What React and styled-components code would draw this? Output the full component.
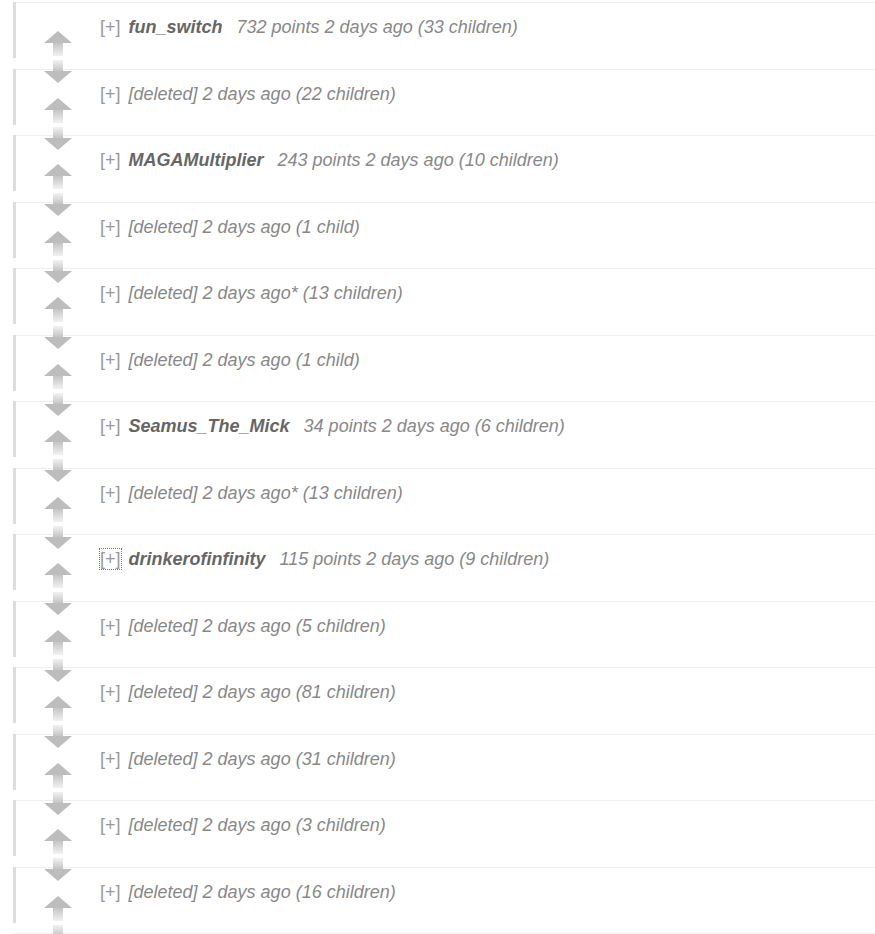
import React from 'react';
import styled, { createGlobalStyle } from 'styled-components';

const GlobalStyle = createGlobalStyle`
  body {
    margin: 0;
    background: #ffffff;
    font-family: "Liberation Sans", Arial, sans-serif;
  }
`;

const List = styled.div`
  padding-top: 2px;
  overflow: hidden;
  height: 934px;
  box-sizing: border-box;
`;

const Row = styled.div`
  display: flex;
  align-items: flex-start;
  height: 66.5px;
  margin-left: 13px;
  border-top: 1px solid #efefef;
  box-sizing: border-box;
`;

const Bar = styled.div`
  flex-shrink: 0;
  width: 3px;
  height: 56px;
  margin-top: -1px;
  background: #dddddd;
`;

const Arrows = styled.div`
  flex-shrink: 0;
  display: flex;
  flex-direction: column;
  width: 28px;
  margin: 26px 28px 0 28px;
  position: relative;
  z-index: 1;
`;

const Entry = styled.div`
  padding-top: 14px;
  font-size: 18px;
  line-height: 20px;
  white-space: nowrap;
`;

const Toggle = styled.span`
  display: inline-block;
  color: #999999;
  margin-right: 8px;
  outline: ${p => (p.focused ? '1px dotted #777' : 'none')};
`;

const Author = styled.span`
  font-weight: bold;
  font-style: italic;
  color: #666666;
  margin-right: 14px;
`;

const Meta = styled.span`
  font-style: italic;
  color: #888888;
`;

const UpArrow = () => (
  <svg width="28" height="27" viewBox="0 0 28 27">
    <defs>
      <linearGradient id="upStem" x1="0" y1="0" x2="0" y2="1">
        <stop offset="0" stopColor="#c4c4c4" />
        <stop offset="1" stopColor="#f2f2f2" />
      </linearGradient>
    </defs>
    <polygon points="0,14 14,2 28,14" fill="#bdbdbd" />
    <rect x="9" y="14" width="10" height="13" fill="url(#upStem)" />
  </svg>
);

const DownArrow = () => (
  <svg width="28" height="27" viewBox="0 0 28 27">
    <defs>
      <linearGradient id="downStem" x1="0" y1="0" x2="0" y2="1">
        <stop offset="0" stopColor="#f2f2f2" />
        <stop offset="1" stopColor="#c4c4c4" />
      </linearGradient>
    </defs>
    <rect x="9" y="4" width="10" height="11" fill="url(#downStem)" />
    <polygon points="0,15 28,15 14,27" fill="#bdbdbd" />
  </svg>
);

const comments = [
  { author: 'fun_switch', meta: '732 points 2 days ago (33 children)' },
  { meta: '[deleted] 2 days ago (22 children)' },
  { author: 'MAGAMultiplier', meta: '243 points 2 days ago (10 children)' },
  { meta: '[deleted] 2 days ago (1 child)' },
  { meta: '[deleted] 2 days ago* (13 children)' },
  { meta: '[deleted] 2 days ago (1 child)' },
  { author: 'Seamus_The_Mick', meta: '34 points 2 days ago (6 children)' },
  { meta: '[deleted] 2 days ago* (13 children)' },
  { author: 'drinkerofinfinity', meta: '115 points 2 days ago (9 children)', focused: true },
  { meta: '[deleted] 2 days ago (5 children)' },
  { meta: '[deleted] 2 days ago (81 children)' },
  { meta: '[deleted] 2 days ago (31 children)' },
  { meta: '[deleted] 2 days ago (3 children)' },
  { meta: '[deleted] 2 days ago (16 children)' },
];

export default function App() {
  return (
    <>
      <GlobalStyle />
      <List>
        {comments.map((c, i) => (
          <Row key={i}>
            <Bar />
            <Arrows>
              <UpArrow />
              <DownArrow />
            </Arrows>
            <Entry>
              <Toggle focused={c.focused}>[+]</Toggle>
              {c.author && <Author>{c.author}</Author>}
              <Meta>{c.meta}</Meta>
            </Entry>
          </Row>
        ))}
        <Row />
      </List>
    </>
  );
}
